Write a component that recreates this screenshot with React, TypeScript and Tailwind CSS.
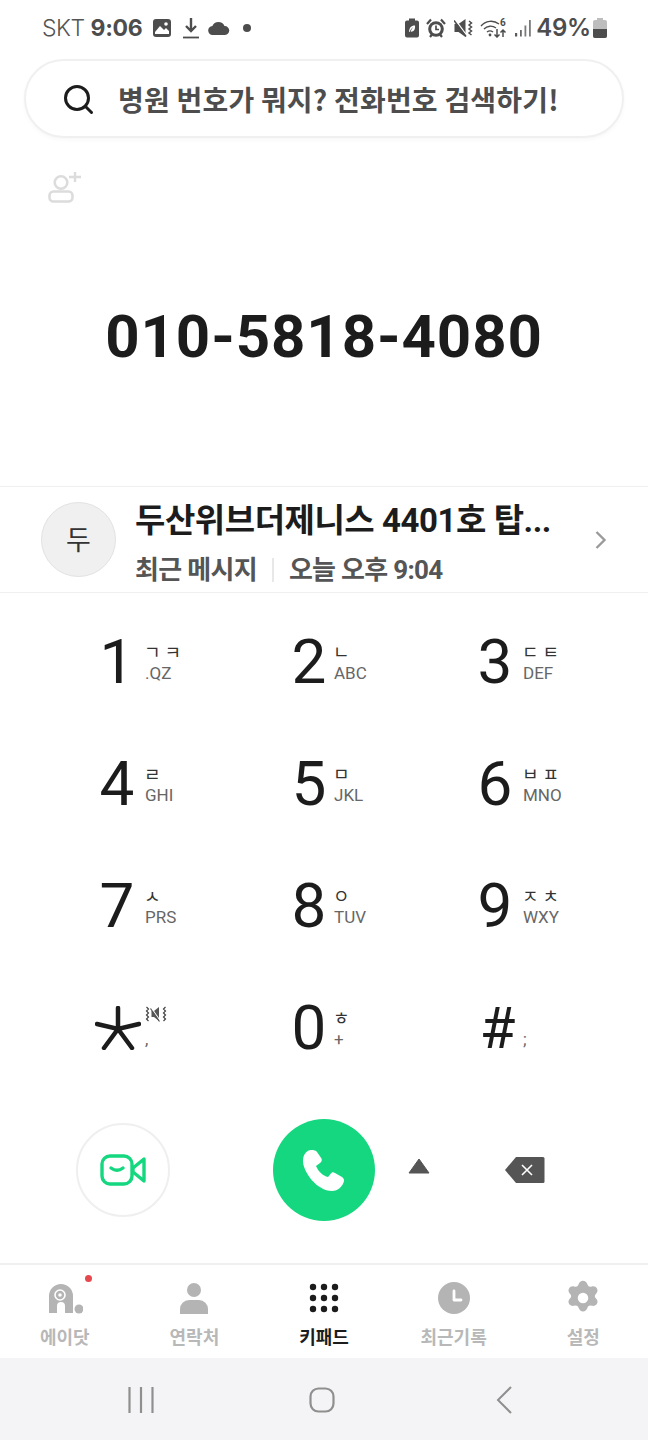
import React from "react";

const KR = { fontFamily: '"Noto Sans CJK KR", sans-serif' };

function StatusIcons() {
  return (
    <div className="flex items-center">
      <svg width="18" height="20" viewBox="0 0 18 20" className="mr-[5px]">
        <path d="M6 0.500h6v2h2a2 2 0 0 1 2 2v13a2 2 0 0 1-2 2H4a2 2 0 0 1-2-2v-13a2 2 0 0 1 2-2h2z" fill="#4d4d4d" />
        <path d="M12 7.500c-3 0-5.500 1.500-6 6 .300.500.800.500 1 .300 0-1.500 1.500-3.800 3.500-4.800-1.300 1.300-2.300 2.800-2.700 4.700 3 .200 4.700-2.500 4.200-6.200z" fill="#fff" />
      </svg>
      <svg width="20" height="20" viewBox="0 0 20 20" className="mr-[8px]">
        <circle cx="10" cy="11" r="7.800" fill="#4d4d4d" />
        <circle cx="10" cy="11" r="4.800" fill="#fff" />
        <path d="M10 7.500V11.500h3" fill="none" stroke="#4d4d4d" strokeWidth="1.700" />
        <path d="M1 6l4-4.500M19 6l-4-4.500M4 19l2-2.500M16 19l-2-2.500" stroke="#4d4d4d" strokeWidth="2.200" />
      </svg>
      <svg width="20" height="20" viewBox="0 0 20 20" className="mr-[6px]">
        <path d="M0.500 6h4l7-5v18l-7-5h-4z" fill="#4d4d4d" />
        <path d="M1 1.500l11 15" stroke="#fff" strokeWidth="1.300" />
        <path d="M1 1l12 16" stroke="#4d4d4d" strokeWidth="1.500" transform="translate(-1 1.500)" />
        <path d="M15 3l2.500 2-2.500 2 2.500 2-2.500 2 2.500 2-2.500 2 2.500 2" fill="none" stroke="#4d4d4d" strokeWidth="1.500" />
      </svg>
      <svg width="28" height="20" viewBox="0 0 28 20" className="mr-[6px]">
        <path d="M1 8a13 13 0 0 1 18-2M4 11a9 9 0 0 1 12-1M7 14a5 5 0 0 1 6 0" fill="none" stroke="#4d4d4d" strokeWidth="1.400" />
        <circle cx="10" cy="17" r="1.400" fill="#4d4d4d" />
        <path d="M17 11v8m-2.500-2.500L17 19l2.500-2.500M23 19v-7m-2.500 2.500L23 12l2.500 2.500" fill="none" stroke="#4d4d4d" strokeWidth="1.500" />
        <text x="20" y="8" fontSize="10" fontWeight="700" fill="#4d4d4d" fontFamily="Roboto, sans-serif">6</text>
      </svg>
      <svg width="18" height="20" viewBox="0 0 18 20" className="mr-[4px]">
        <rect x="1" y="15" width="2.200" height="3.500" fill="#5a5a5a" />
        <rect x="6" y="12" width="1.800" height="6.500" fill="#6a6a6a" />
        <rect x="10.500" y="7.500" width="1.800" height="11" fill="#7a7a7a" />
        <rect x="15" y="2" width="1.800" height="16.500" fill="#7a7a7a" />
      </svg>
    </div>
  );
}

const keys = [
  ["1", "ㄱ ㅋ", ".QZ", 0],
  ["2", "ㄴ", "ABC", 1],
  ["3", "ㄷ ㅌ", "DEF", 2],
  ["4", "ㄹ", "GHI", 0],
  ["5", "ㅁ", "JKL", 1],
  ["6", "ㅂ ㅍ", "MNO", 2],
  ["7", "ㅅ", "PRS", 0],
  ["8", "ㅇ", "TUV", 1],
  ["9", "ㅈ ㅊ", "WXY", 2],
] as const;

function Key({ d, top, bottom, col }: { d: string; top: string; bottom: string; col: number }) {
  return (
    <div className="flex h-[122px] items-center">
      <div
        className={`w-[48px] text-center text-[62px] leading-none text-[#1c1c1c] ${col === 1 ? "mr-[1px]" : "mr-[4px]"}`}
        style={{ fontFamily: "Roboto, sans-serif" }}
      >
        {d}
      </div>
      <div className="flex flex-col">
        <span className="-ml-[1px] h-[22px] text-[18px] leading-[22px] text-[#333]" style={KR}>{top}</span>
        <span className="h-[22px] text-[17px] leading-[22px] text-[#666]" style={{ fontFamily: "Roboto, sans-serif" }}>{bottom}</span>
      </div>
    </div>
  );
}

function Tab({ label, active, children }: { label: string; active?: boolean; children: React.ReactNode }) {
  return (
    <div className="flex flex-col items-center">
      <div className="mt-[15px] flex h-[36px] w-[44px] items-center justify-center">{children}</div>
      <span
        className={`mt-[8px] text-[18px] font-bold leading-[24px] ${active ? "text-[#1c1c1c]" : "text-[#b8b8b8]"}`}
        style={KR}
      >
        {label}
      </span>
    </div>
  );
}

export default function App() {
  return (
    <div className="flex h-[1440px] w-[648px] flex-col overflow-hidden bg-white" style={{ fontFamily: "Roboto, sans-serif" }}>
      {/* status bar */}
      <div className="flex h-[59px] shrink-0 items-start justify-between pl-[42px] pr-[41px] pt-[13px] text-[#4d4d4d]">
        <div className="flex h-[30px] items-center">
          <span className="text-[23px] tracking-[-0.5px] text-[#555]" style={{ fontFamily: "Inter, sans-serif", fontWeight: 300 }}>SKT</span>
          <span className="ml-[6px] text-[23px] tracking-[-0.3px]" style={{ fontFamily: "Inter, sans-serif", fontWeight: 700 }}>9:06</span>
          <svg width="20" height="20" viewBox="0 0 20 20" className="ml-[10px]">
            <rect x="1" y="1" width="18" height="18" rx="3" fill="#4d4d4d" />
            <path d="M3 14l5-6 4 4 2-2 3 3v3H3z" fill="#fff" />
            <circle cx="14" cy="6" r="1.800" fill="#fff" />
          </svg>
          <svg width="18" height="22" viewBox="0 0 18 22" className="ml-[10px]">
            <path d="M9 1v12M4 9l5 5 5-5" fill="none" stroke="#4d4d4d" strokeWidth="2.400" />
            <path d="M1 20.500h16" stroke="#4d4d4d" strokeWidth="1.800" />
          </svg>
          <svg width="22" height="14" viewBox="0 0 22 14" className="ml-[8px]">
            <path d="M5 14a4.500 4.500 0 0 1-.6-9A6.500 6.500 0 0 1 16.500 5 4.500 4.500 0 0 1 17 14z" fill="#4d4d4d" />
          </svg>
          <span className="ml-[13px] h-[8px] w-[8px] rounded-full bg-[#4d4d4d]" />
        </div>
        <div className="flex h-[30px] items-center">
          <StatusIcons />
          <span className="text-[24px] font-semibold leading-none tracking-[-0.2px]" style={{ fontFamily: "Inter, sans-serif" }}>49%</span>
          <svg width="14" height="20" viewBox="0 0 14 20" className="ml-[2px]">
            <path d="M4 0h6v2h2a2 2 0 0 1 2 2v14a2 2 0 0 1-2 2H2a2 2 0 0 1-2-2V4a2 2 0 0 1 2-2h2z" fill="#bdbdbd" />
            <path d="M0 11h14v7a2 2 0 0 1-2 2H2a2 2 0 0 1-2-2z" fill="#4d4d4d" />
          </svg>
        </div>
      </div>

      {/* search */}
      <div className="mx-[24px] flex h-[79px] shrink-0 items-center rounded-full border-2 border-[#f0f0f0] bg-white pl-[36px] shadow-[0_2px_4px_rgba(0,0,0,0.03)]">
        <svg width="32" height="32" viewBox="0 0 32 32" fill="none" stroke="#1c1c1c" strokeWidth="3">
          <circle cx="15" cy="15" r="11.500" />
          <path d="M23.500 23.500 29.500 29.500" strokeLinecap="round" />
        </svg>
        <span className="ml-[24px] text-[28px] font-bold tracking-[0.2px] text-[#4d4d4d]" style={KR}>병원 번호가 뭐지? 전화번호 검색하기!</span>
      </div>

      {/* add contact */}
      <div className="ml-[48px] mt-[31px] h-[34px] shrink-0">
        <svg width="34" height="34" viewBox="0 0 34 34" fill="none" stroke="#dcdcdc" strokeWidth="2.600">
          <circle cx="13" cy="13.500" r="6.300" />
          <rect x="1.500" y="22.500" width="23" height="10" rx="4" />
          <path d="M27 3v10M21 8h12" strokeWidth="2.400" />
        </svg>
      </div>

      {/* number */}
      <div className="flex h-[283px] shrink-0 items-start justify-center pt-[99px] text-[60px] font-bold leading-[70px] tracking-[0.9px] text-[#1c1c1c]">
        010-5818-4080
      </div>

      {/* contact */}
      <div className="flex h-[107px] shrink-0 items-center border-y border-[#efefef] pl-[41px] pr-[40px]">
        <div className="flex h-[75px] w-[75px] shrink-0 items-center justify-center rounded-full border border-[#e2e2e2] bg-[#f0f0f0] text-[27px] text-[#333]" style={KR}>두</div>
        <div className="ml-[19px] flex-1 pt-[6px]">
          <div className="text-[33px] font-bold leading-[46px] tracking-[-0.45px] text-[#1c1c1c]" style={{ fontFamily: 'Roboto, "Noto Sans CJK KR", sans-serif' }}>두산위브더제니스 4401호 탑...</div>
          <div className="mt-[9px] flex items-center text-[26px] font-bold leading-[34px] tracking-[-0.7px] text-[#555]" style={{ fontFamily: 'Roboto, "Noto Sans CJK KR", sans-serif' }}>
            <span>최근 메시지</span>
            <span className="mx-[15px] h-[24px] w-[2px] bg-[#e8e8e8]" />
            <span>오늘 오후 9:04</span>
          </div>
        </div>
        <svg width="14" height="22" viewBox="0 0 14 22" fill="none" stroke="#9a9a9a" strokeWidth="2.400">
          <path d="M2.500 3 10.500 11 2.500 19" />
        </svg>
      </div>

      {/* keypad */}
      <div className="grid shrink-0 grid-cols-[192px_186px_1fr] pl-[93px] pt-[8px]">
        {keys.map(([d, t, b, c]) => (
          <Key key={d} d={d} top={t} bottom={b} col={c} />
        ))}
        <div className="flex h-[122px] items-center">
          <div className="mr-[4px] flex w-[48px] justify-center pl-[2px]">
            <svg width="46" height="44" viewBox="0 0 46 44" stroke="#1c1c1c" strokeWidth="4.500" strokeLinecap="round">
              <path d="M23 2v21M2 18l21 5 21-5M9 42l14-19 14 19" fill="none" />
            </svg>
          </div>
          <div className="flex flex-col">
            <svg width="22" height="16" viewBox="0 0 22 16" className="mb-[6px]" fill="none" stroke="#444" strokeWidth="1.200">
              <path d="M1.500 1l2 2-2 2 2 2-2 2 2 2-2 2 2 2M20.500 1l-2 2 2 2-2 2 2 2-2 2 2 2-2 2" />
              <path d="M6.500 5h2.500l5-4v14l-5-4H6.500z" fill="#555" stroke="none" />
              <path d="M6 1.500l9 13" stroke="#fff" strokeWidth="1.200" />
              <path d="M5.500 2.500l9 13" stroke="#555" strokeWidth="1.200" />
            </svg>
            <span className="h-[22px] text-[17px] leading-[22px] text-[#666]">,</span>
          </div>
        </div>
        <Key d="0" top="ㅎ" bottom="+" col={1} />
        <div className="flex h-[122px] items-center">
          <div className="mr-[4px] flex w-[48px] justify-center pl-[5px] text-[58px] leading-none text-[#1c1c1c]">#</div>
          <span className="mt-[22px] text-[17px] leading-[22px] text-[#666]">;</span>
        </div>
      </div>

      {/* actions */}
      <div className="mt-[30px] flex h-[102px] shrink-0 items-center pl-[76px]">
        <div className="flex h-[94px] w-[94px] items-center justify-center rounded-full border-2 border-[#efefef]">
          <svg width="46" height="32" viewBox="0 0 46 32" fill="none" stroke="#14d77f" strokeWidth="3.400">
            <rect x="2" y="2" width="30" height="28" rx="8" />
            <path d="M33 14 44 5v22L33 18z" strokeLinejoin="round" />
            <path d="M11 14c4 3 8 3 12 0" strokeLinecap="round" />
          </svg>
        </div>
        <div className="ml-[103px] flex h-[102px] w-[102px] items-center justify-center rounded-full bg-[#14d77f]">
          <svg width="50" height="50" viewBox="0 0 50 50" fill="#fff">
            <path d="M12 5C8 5 4 9 4 16C4 27 18 46 33 46C39 46 44 41 45 36C45.500 34 44 33 43 32L36 28C34 27 33 27 31.500 29L29 32C24 31 19 26 17 21L21 18C23 16.500 23 15 22.500 13.500L18 7C17 5.500 15 5 12 5z" />
          </svg>
        </div>
        <svg width="22" height="16" viewBox="0 0 22 16" className="mb-[8px] ml-[33px]">
          <path d="M11 1 21 15H1z" fill="#555" stroke="#555" strokeLinejoin="round" />
        </svg>
        <svg width="41" height="28" viewBox="0 0 41 28" className="ml-[74px]">
          <path d="M12 1h27a1.500 1.500 0 0 1 1.500 1.500v23A1.500 1.500 0 0 1 39 27H12L1 14z" fill="#555" />
          <path d="M18 9l10 10M28 9 18 19" stroke="#fff" strokeWidth="1.600" />
        </svg>
      </div>

      {/* tabs */}
      <div className="mt-[42px] grid h-[95px] shrink-0 grid-cols-5 border-t-2 border-[#efefef]">
        <div className="relative">
          <Tab label="에이닷">
            <svg width="36" height="32" viewBox="0 0 36 32">
              <path d="M2 31V14a12 12 0 0 1 24 0v17H18v-7a4 4 0 0 0-8 0v7z" fill="#b4b4b4" />
              <circle cx="13" cy="13" r="5" fill="none" stroke="#fff" strokeWidth="1.600" />
              <circle cx="13" cy="13" r="1.800" fill="#fff" />
              <circle cx="32" cy="27" r="4.500" fill="#b4b4b4" />
            </svg>
          </Tab>
          <span className="absolute left-[85px] top-[10px] h-[7px] w-[7px] rounded-full bg-[#e5484d]" />
        </div>
        <Tab label="연락처">
          <svg width="30" height="32" viewBox="0 0 30 32" fill="#b4b4b4">
            <circle cx="15" cy="8" r="7" />
            <path d="M1 32v-5a9 9 0 0 1 9-9h10a9 9 0 0 1 9 9v5z" />
          </svg>
        </Tab>
        <Tab label="키패드" active>
          <svg width="30" height="30" viewBox="0 0 30 30" fill="#1c1c1c">
            <circle cx="4" cy="4" r="3.200" /><circle cx="15" cy="4" r="3.200" /><circle cx="26" cy="4" r="3.200" />
            <circle cx="4" cy="15" r="3.200" /><circle cx="15" cy="15" r="3.200" /><circle cx="26" cy="15" r="3.200" />
            <circle cx="4" cy="26" r="3.200" /><circle cx="15" cy="26" r="3.200" /><circle cx="26" cy="26" r="3.200" />
          </svg>
        </Tab>
        <Tab label="최근기록">
          <svg width="32" height="32" viewBox="0 0 32 32">
            <circle cx="16" cy="16" r="16" fill="#b4b4b4" />
            <path d="M16 9v9h7" fill="none" stroke="#fff" strokeWidth="2.800" strokeLinecap="round" strokeLinejoin="round" />
          </svg>
        </Tab>
        <Tab label="설정">
          <svg width="36" height="36" viewBox="0 0 24 24">
            <path fillRule="evenodd" fill="#b4b4b4" d="M12 0.500c1.400 0 2.400 1 2.900 2.300.6 1.500 1.400 1.900 3 1.500 1.400-.3 2.700.1 3.400 1.300.7 1.200.4 2.500-.6 3.500-1.100 1.200-1.100 2.100 0 3.300 1 1 1.300 2.300.6 3.500-.7 1.200-2 1.600-3.400 1.300-1.600-.4-2.400 0-3 1.500-.5 1.300-1.500 2.300-2.900 2.300s-2.400-1-2.900-2.300c-.6-1.500-1.400-1.900-3-1.500-1.400.3-2.700-.1-3.400-1.300-.7-1.200-.4-2.500.6-3.500 1.100-1.200 1.100-2.100 0-3.300-1-1-1.300-2.300-.6-3.500.7-1.200 2-1.600 3.400-1.300 1.600.4 2.400 0 3-1.500.5-1.300 1.500-2.300 2.900-2.300zM12 8.500a3.500 3.500 0 1 0 0 7 3.500 3.500 0 0 0 0-7z" />
          </svg>
        </Tab>
      </div>

      {/* nav */}
      <div className="flex h-[82px] shrink-0 items-center bg-[#f4f4f6] pt-[2px]">
        <svg width="26" height="26" viewBox="0 0 26 26" className="ml-[128px]" stroke="#8f8f8f" strokeWidth="2.200">
          <path d="M1.500 0v26M13 0v26M24.500 0v26" />
        </svg>
        <svg width="26" height="26" viewBox="0 0 26 26" className="ml-[155px]" fill="none" stroke="#8f8f8f" strokeWidth="2.200">
          <rect x="1.500" y="1.500" width="23" height="23" rx="8" />
        </svg>
        <svg width="16" height="28" viewBox="0 0 16 28" className="ml-[161px]" fill="none" stroke="#8f8f8f" strokeWidth="2">
          <path d="M15 1 2 14 15 27" />
        </svg>
      </div>
    </div>
  );
}
